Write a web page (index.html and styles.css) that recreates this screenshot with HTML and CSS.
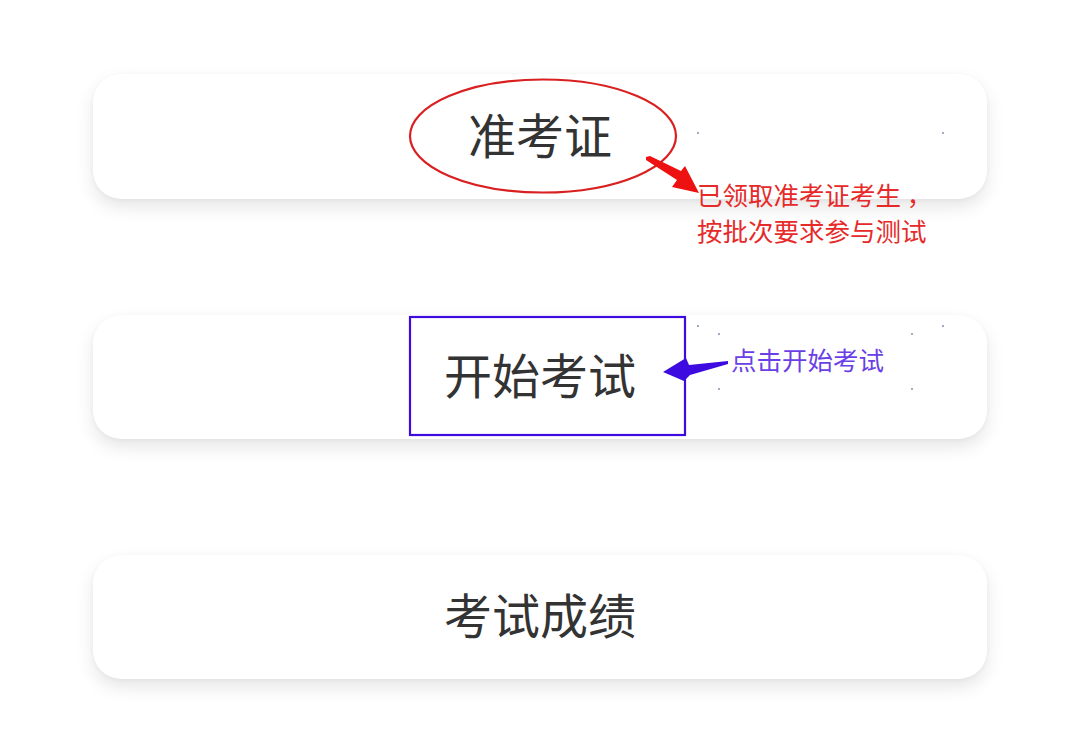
FILE: index.html
```html
<!DOCTYPE html>
<html lang="zh">
<head>
<meta charset="utf-8">
<title>考试</title>
<link rel="stylesheet" href="styles.css">
</head>
<body>
<div class="page">
  <div class="cards">
    <div class="card card-first">准考证</div>
    <div class="card">开始考试</div>
    <div class="card">考试成绩</div>
  </div>

  <svg class="marks" width="1077" height="746" viewBox="0 0 1077 746" xmlns="http://www.w3.org/2000/svg">
    <ellipse cx="543" cy="136" rx="133" ry="56.5" fill="none" stroke="#d91f1f" stroke-width="2.2"/>
    <polygon points="646,157 650,156 681,171 685,166 699,193 672,187 677,180 646,160" fill="#ee1111"/>
    <rect x="410" y="317" width="275" height="118" fill="none" stroke="#3d0ae0" stroke-width="2.2"/>
    <polygon points="663,372 686,358 689,365 728,361 728,364 690,375 684,381" fill="#3d0ae0"/>
    <g fill="#a8a8c4">
      <rect x="697" y="132" width="2" height="2"/>
      <rect x="942" y="132" width="2" height="2"/>
      <rect x="697" y="325" width="2" height="2"/>
      <rect x="718" y="333" width="2" height="2"/>
      <rect x="911" y="333" width="2" height="2"/>
      <rect x="942" y="325" width="2" height="2"/>
      <rect x="718" y="388" width="2" height="2"/>
      <rect x="911" y="388" width="2" height="2"/>
    </g>
  </svg>

  <div class="note note-red">已领取准考证考生 ，<br>按批次要求参与测试</div>
  <div class="note note-blue">点击开始考试</div>
</div>
</body>
</html>
```

FILE: styles.css
```css
html, body {
  margin: 0;
  padding: 0;
  background: #ffffff;
}

.page {
  position: relative;
  width: 1077px;
  height: 746px;
  overflow: hidden;
  font-family: "Noto Sans CJK SC", "Noto Sans", sans-serif;
}

.cards {
  display: flex;
  flex-direction: column;
  gap: 116px;
  padding: 74px 90px 0 93px;
}

.card {
  box-sizing: border-box;
  height: 124px;
  padding-bottom: 8px;
  border-radius: 28px;
  background: #ffffff;
  box-shadow: 0 8px 18px rgba(0, 0, 0, 0.1), 0 1px 4px rgba(0, 0, 0, 0.04);
  display: flex;
  align-items: center;
  justify-content: center;
  font-size: 48px;
  color: #333333;
}

.card-first {
  height: 125px;
}

.marks {
  position: absolute;
  left: 0;
  top: 0;
  pointer-events: none;
}

.note {
  position: absolute;
  font-size: 25.5px;
  line-height: 36px;
  white-space: nowrap;
}

.note-red {
  left: 697px;
  top: 176px;
  color: #e62a2a;
}

.note-blue {
  left: 731px;
  top: 341px;
  color: #6a3fe6;
}
```
